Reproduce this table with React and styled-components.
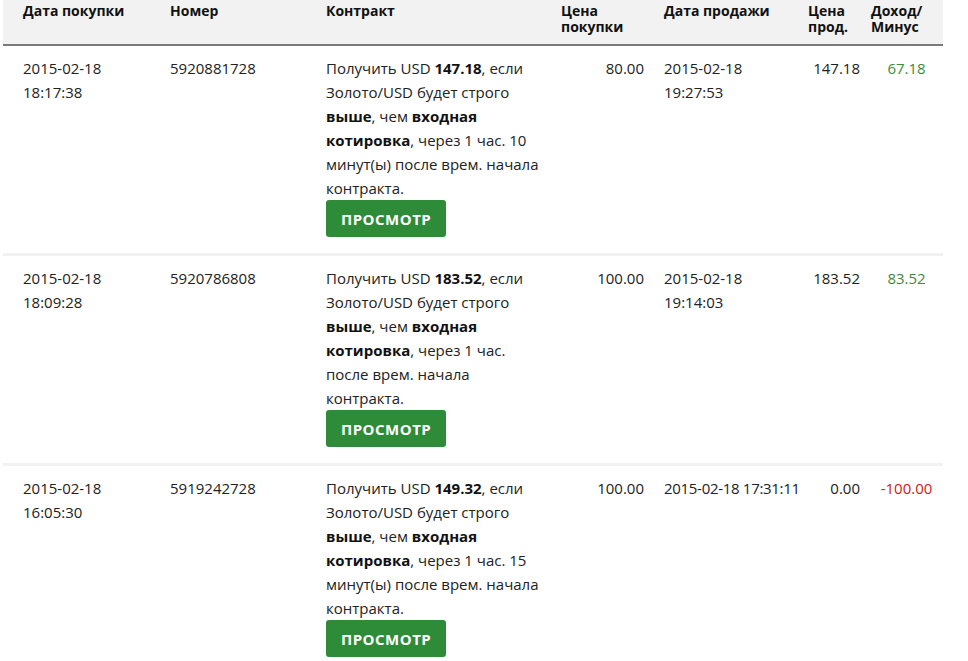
import React from "react";
import styled, { createGlobalStyle } from "styled-components";

const Global = createGlobalStyle`
  html, body { margin: 0; padding: 0; background: #fff; }
  body { font-family: "Open Sans", Lato, "Liberation Sans", sans-serif; color: #222; }
`;

const COLS = "147px 156px 245px 103px 144px 72px 73px";

const Wrapper = styled.div`
  padding-left: 3px;
  width: 940px;
`;

const HeaderRow = styled.div`
  display: grid;
  grid-template-columns: ${COLS};
  background: #f2f2f2;
  height: 44px;
  border-bottom: 2px solid #7a7a7a;
`;

const HeadCell = styled.div`
  font-size: 14px;
  font-weight: 700;
  line-height: 16px;
  color: #111;
  padding-top: 3px;
  padding-left: ${(p) => p.$pl ?? 10}px;
`;

const Row = styled.div`
  display: grid;
  grid-template-columns: ${COLS};
  border-top: ${(p) => (p.$first ? "0" : "3px solid #f2f2f2")};
  padding: 10px 0 16px;
`;

const Cell = styled.div`
  font-size: 15px;
  line-height: 24px;
  padding-left: ${(p) => p.$pl ?? 10}px;
  padding-right: ${(p) => p.$pr ?? 0}px;
  text-align: ${(p) => p.$align || "left"};
  color: ${(p) => p.$color || "#222"};
  white-space: ${(p) => (p.$nowrap ? "nowrap" : "normal")};
  letter-spacing: ${(p) => (p.$nowrap ? "-0.3px" : "normal")};
`;

const Contract = styled.div`
  font-size: 15px;
  line-height: 24px;
  padding-left: 20px;
  padding-right: 3px;
  b { font-weight: 700; color: #111; }
`;

const ViewButton = styled.button`
  display: block;
  height: 37px;
  padding: 0 15px;
  border: 0;
  border-radius: 3px;
  background: #2e8b37;
  color: #fff;
  font-family: inherit;
  font-size: 15px;
  font-weight: 700;
  letter-spacing: 0.5px;
  text-transform: uppercase;
  cursor: pointer;
`;

const rows = [
  {
    buy: ["2015-02-18", "18:17:38"],
    id: "5920881728",
    payout: "147.18",
    dur: "1 час. 10 минут(ы)",
    price: "80.00",
    sell: ["2015-02-18", "19:27:53"],
    sellPrice: "147.18",
    pl: "67.18",
    plColor: "#3d8a41",
  },
  {
    buy: ["2015-02-18", "18:09:28"],
    id: "5920786808",
    payout: "183.52",
    dur: "1 час.",
    price: "100.00",
    sell: ["2015-02-18", "19:14:03"],
    sellPrice: "183.52",
    pl: "83.52",
    plColor: "#3d8a41",
  },
  {
    buy: ["2015-02-18", "16:05:30"],
    id: "5919242728",
    payout: "149.32",
    dur: "1 час. 15 минут(ы)",
    price: "100.00",
    sell: ["2015-02-18", "17:31:11"],
    sellOneLine: true,
    sellPrice: "0.00",
    pl: "-100.00",
    plColor: "#d0201b",
  },
];

export default function App() {
  return (
    <Wrapper>
      <Global />
      <HeaderRow>
        <HeadCell $pl={20}>Дата покупки</HeadCell>
        <HeadCell $pl={20}>Номер</HeadCell>
        <HeadCell $pl={20}>Контракт</HeadCell>
        <HeadCell>Цена покупки</HeadCell>
        <HeadCell>Дата продажи</HeadCell>
        <HeadCell>Цена прод.</HeadCell>
        <HeadCell $pl={1}>Доход/ Минус</HeadCell>
      </HeaderRow>
      {rows.map((r, i) => (
        <Row key={r.id} $first={i === 0}>
          <Cell $pl={20}>
            {r.buy[0]}
            <br />
            {r.buy[1]}
          </Cell>
          <Cell $pl={20}>{r.id}</Cell>
          <Contract>
            Получить USD <b>{r.payout}</b>, если Золото/USD будет строго <b>выше</b>, чем{" "}
            <b>входная котировка</b>, через {r.dur} после врем. начала контракта.
            <ViewButton>Просмотр</ViewButton>
          </Contract>
          <Cell $align="right" $pr={10}>{r.price}</Cell>
          <Cell $nowrap={r.sellOneLine}>
            {r.sellOneLine ? (
              `${r.sell[0]} ${r.sell[1]}`
            ) : (
              <>
                {r.sell[0]}
                <br />
                {r.sell[1]}
              </>
            )}
          </Cell>
          <Cell $align="right" $pr={10}>{r.sellPrice}</Cell>
          <Cell $align="center" $pl={0} $color={r.plColor}>{r.pl}</Cell>
        </Row>
      ))}
    </Wrapper>
  );
}
